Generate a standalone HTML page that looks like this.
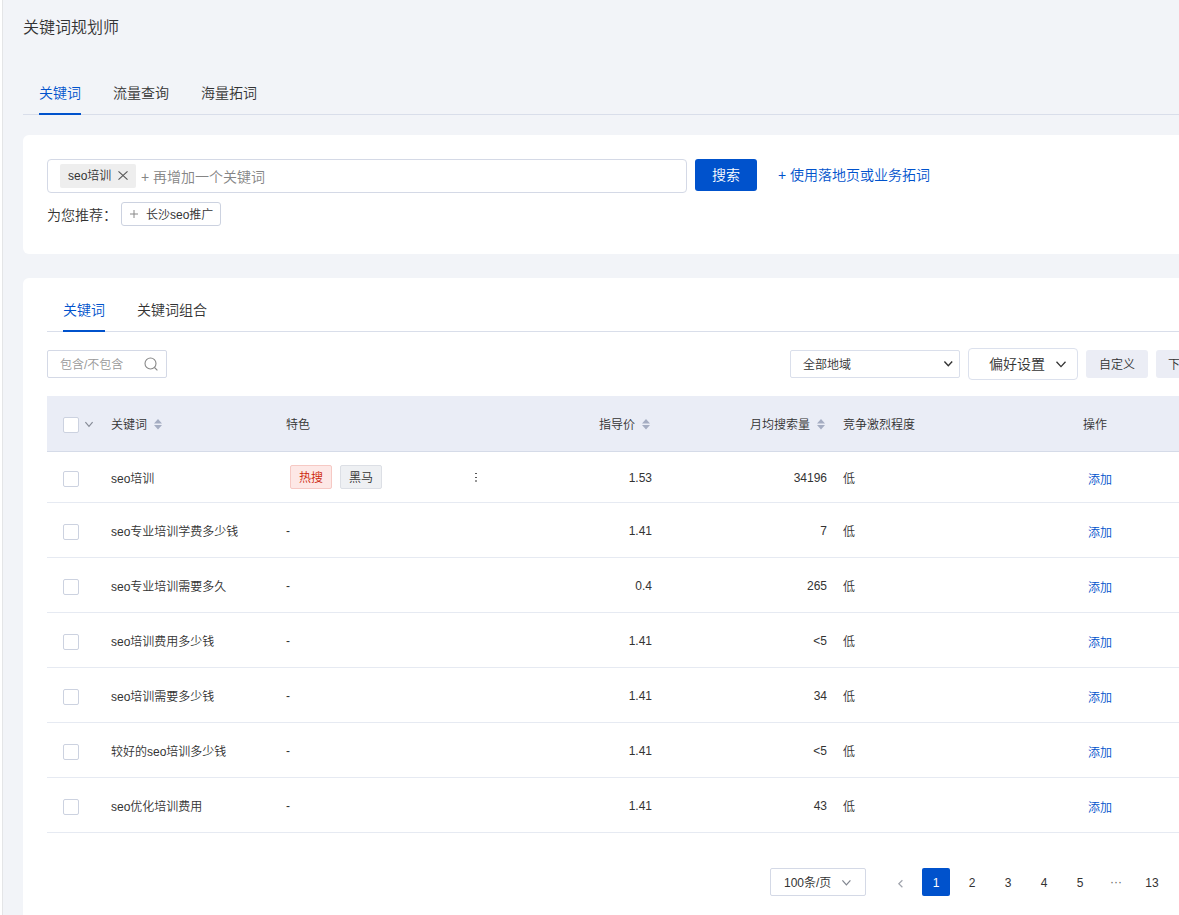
<!DOCTYPE html>
<html lang="zh-CN">
<head>
<meta charset="utf-8">
<title>关键词规划师</title>
<style>
*{box-sizing:border-box;margin:0;padding:0}
html,body{width:1179px;height:915px;overflow:hidden}
body{background:#f2f4f8;font-family:"Liberation Sans","Noto Sans CJK SC",sans-serif;color:#333;font-size:12px;position:relative;font-weight:350}
.abs{position:absolute}
.edge{left:0;top:0;width:2px;height:915px;background:#fff}
.edge2{left:2px;top:0;width:1px;height:915px;background:#e4e5e7}
.title{left:23px;top:16px;font-size:16px;line-height:24px;color:#333;white-space:nowrap}
.tabs{left:23px;top:72px;width:1156px;height:43px;border-bottom:1px solid #d9deea}
.tab{position:absolute;top:0;height:43px;line-height:42px;font-size:14px;color:#333;white-space:nowrap}
.tab.on{color:#0052cc}
.tab.on:after{content:"";position:absolute;left:0;right:0;bottom:0;height:2px;background:#0052cc}
.card{background:#fff;border-radius:6px 0 0 6px}
.c1{left:23px;top:135px;width:1156px;height:119px}
.c2{left:23px;top:278px;width:1156px;height:637px;border-radius:6px 0 0 0}
.inp{left:47px;top:159px;width:640px;height:34px;border:1px solid #d4d9e6;border-radius:4px;background:#fff}
.tag{left:60px;top:164px;width:76px;height:24px;background:#eee;border-radius:2px;font-size:12px;line-height:25px;color:#333;padding-left:8px;white-space:nowrap}
.ph{left:141px;top:167px;font-size:14px;line-height:20px;color:#858585;white-space:nowrap}
.btn{left:695px;top:159px;width:62px;height:32px;background:#0052cc;color:#fff;border-radius:3px;font-size:14px;line-height:32px;text-align:center}
.lnk{left:778px;top:165px;font-size:14px;line-height:20px;color:#0052cc;white-space:nowrap}
.rec{left:47px;top:206px;font-size:14px;line-height:18px;color:#333;white-space:nowrap}
.chip{left:121px;top:202px;width:100px;height:24px;border:1px solid #ccd2e0;border-radius:3px;font-size:12px;line-height:24px;color:#333;padding-left:24px;white-space:nowrap;background:#fff}
.tabs2{left:47px;top:289px;width:1132px;height:43px;border-bottom:1px solid #d9deea}
.flt{left:47px;top:350px;width:120px;height:28px;border:1px solid #d4d9e6;border-radius:2px;font-size:12px;line-height:28px;color:#999;padding-left:12px;white-space:nowrap;background:#fff}
.sel{left:790px;top:350px;width:170px;height:28px;border:1px solid #dadfeb;border-radius:2px;font-size:12px;line-height:29px;color:#333;padding-left:12px;background:#fff}
.pref{left:968px;top:348px;width:110px;height:32px;border:1px solid #dce1ed;border-radius:4px;font-size:14px;line-height:30px;color:#333;padding-left:20px;background:#fff}
.gbtn{top:350px;height:28px;background:#ebedf5;border-radius:3px;font-size:12px;line-height:30px;color:#333;text-align:center;white-space:nowrap}
.thead{left:47px;top:396px;width:1132px;height:56px;background:#eaedf6;border-bottom:1px solid #d5dbe8}
.th{position:absolute;top:398px;height:55px;line-height:55px;font-size:12px;color:#333;white-space:nowrap}
.row{position:absolute;left:47px;width:1132px;border-bottom:1px solid #e6eaf2}
.cell{position:absolute;font-size:12px;line-height:20px;color:#333;white-space:nowrap}
.r{text-align:right}
.cb{position:absolute;left:63px;width:16px;height:16px;border:1px solid #ccd2e0;border-radius:2px;background:#fff}
.add{color:#0052cc}
.pg{position:absolute;top:868px;height:28px;line-height:30px;font-size:12px;color:#333;text-align:center;white-space:nowrap}
svg{position:absolute;overflow:visible}
</style>
</head>
<body>
<div class="abs edge"></div><div class="abs edge2"></div>
<div class="abs title">关键词规划师</div>
<div class="abs tabs">
  <div class="tab on" style="left:16px">关键词</div>
  <div class="tab" style="left:90px">流量查询</div>
  <div class="tab" style="left:178px">海量拓词</div>
</div>

<div class="abs card c1"></div>
<div class="abs inp"></div>
<div class="abs tag">seo培训</div>
<svg style="left:118px;top:171px" width="10" height="9" viewBox="0 0 10 9"><path d="M0.5 0.3L9.5 8.7M9.5 0.3L0.5 8.7" stroke="#555" stroke-width="1.1" fill="none"/></svg>
<div class="abs ph">+ 再增加一个关键词</div>
<div class="abs btn">搜索</div>
<div class="abs lnk">+ 使用落地页或业务拓词</div>
<div class="abs rec">为您推荐：</div>
<div class="abs chip">长沙seo推广</div>
<svg style="left:130px;top:210px" width="8" height="8" viewBox="0 0 8 8"><path d="M4 0V8M0 4H8" stroke="#888" stroke-width="1" fill="none"/></svg>

<div class="abs card c2"></div>
<div class="abs tabs2">
  <div class="tab on" style="left:16px">关键词</div>
  <div class="tab" style="left:90px">关键词组合</div>
</div>
<div class="abs flt">包含/不包含</div>
<svg style="left:144px;top:357px" width="15" height="15" viewBox="0 0 15 15"><circle cx="6.5" cy="6.5" r="5.5" stroke="#888" stroke-width="1.1" fill="none"/><path d="M10.5 10.5L13.4 13.4" stroke="#888" stroke-width="1.1" fill="none"/></svg>
<div class="abs sel">全部地域</div>
<svg style="left:944px;top:361px" width="9" height="6" viewBox="0 0 9 6"><path d="M0.4 0.5L4.3 4.7L8.2 0.5" stroke="#333" stroke-width="1.4" fill="none"/></svg>
<div class="abs pref">偏好设置</div>
<svg style="left:1056px;top:361px" width="10" height="7" viewBox="0 0 10 7"><path d="M0.5 0.8L5 5.6L9.5 0.8" stroke="#333" stroke-width="1.3" fill="none"/></svg>
<div class="abs gbtn" style="left:1086px;width:62px">自定义</div>
<div class="abs gbtn" style="left:1156px;width:62px;text-align:left;padding-left:12px">下载</div>

<div class="abs thead"></div>
<div class="cb" style="top:417px"></div>
<svg style="left:85px;top:422px" width="8" height="5" viewBox="0 0 8 5"><path d="M0.4 0.2L4 4.3L7.6 0.2" stroke="#868b96" stroke-width="1.2" fill="none"/></svg>
<div class="th" style="left:111px">关键词</div>
<div class="th" style="left:286px">特色</div>
<div class="th" style="left:599px">指导价</div>
<div class="th" style="left:750px">月均搜索量</div>
<div class="th" style="left:843px">竞争激烈程度</div>
<div class="th" style="left:1083px">操作</div>
<svg class="srt" style="left:154px;top:419px" width="8" height="11" viewBox="0 0 8 11"><path d="M4 0L8 4.5H0Z M4 10.6L8 6.1H0Z" fill="#a5adc2"/></svg>
<svg class="srt" style="left:642px;top:419px" width="8" height="11" viewBox="0 0 8 11"><path d="M4 0L8 4.5H0Z M4 10.6L8 6.1H0Z" fill="#a5adc2"/></svg>
<svg class="srt" style="left:817px;top:419px" width="8" height="11" viewBox="0 0 8 11"><path d="M4 0L8 4.5H0Z M4 10.6L8 6.1H0Z" fill="#a5adc2"/></svg>

<!-- rows -->
<div class="row" style="top:452px;height:51px"></div>
<div class="row" style="top:503px;height:55px"></div>
<div class="row" style="top:558px;height:55px"></div>
<div class="row" style="top:613px;height:55px"></div>
<div class="row" style="top:668px;height:55px"></div>
<div class="row" style="top:723px;height:55px"></div>
<div class="row" style="top:778px;height:55px"></div>

<div class="cb" style="top:471px"></div>
<div class="cell" style="left:111px;top:469px">seo培训</div>
<div class="cell" style="left:290px;top:465px;width:42px;height:24px;line-height:24px;text-align:center;background:#fde8e6;border:1px solid #f6c9c4;border-radius:2px;color:#cc1f0a">热搜</div>
<div class="cell" style="left:340px;top:465px;width:42px;height:24px;line-height:24px;text-align:center;background:#eef0f3;border:1px solid #dcdfe5;border-radius:2px;color:#333">黑马</div>
<svg style="left:475px;top:473px" width="2" height="9" viewBox="0 0 2 9"><rect x="0" y="0" width="2" height="1" fill="#555"/><rect x="0" y="4" width="2" height="1" fill="#555"/><rect x="0" y="7" width="2" height="2" fill="#999"/></svg>
<div class="cell r" style="left:552px;width:100px;top:468px">1.53</div>
<div class="cell r" style="left:727px;width:100px;top:468px">34196</div>
<div class="cell" style="left:843px;top:469px">低</div>
<div class="cell add" style="left:1088px;top:470px">添加</div>

<div class="cb" style="top:524px"></div>
<div class="cell" style="left:111px;top:522px">seo专业培训学费多少钱</div>
<div class="cell" style="left:286px;top:521px">-</div>
<div class="cell r" style="left:552px;width:100px;top:521px">1.41</div>
<div class="cell r" style="left:727px;width:100px;top:521px">7</div>
<div class="cell" style="left:843px;top:522px">低</div>
<div class="cell add" style="left:1088px;top:523px">添加</div>

<div class="cb" style="top:579px"></div>
<div class="cell" style="left:111px;top:577px">seo专业培训需要多久</div>
<div class="cell" style="left:286px;top:576px">-</div>
<div class="cell r" style="left:552px;width:100px;top:576px">0.4</div>
<div class="cell r" style="left:727px;width:100px;top:576px">265</div>
<div class="cell" style="left:843px;top:577px">低</div>
<div class="cell add" style="left:1088px;top:578px">添加</div>

<div class="cb" style="top:634px"></div>
<div class="cell" style="left:111px;top:632px">seo培训费用多少钱</div>
<div class="cell" style="left:286px;top:631px">-</div>
<div class="cell r" style="left:552px;width:100px;top:631px">1.41</div>
<div class="cell r" style="left:727px;width:100px;top:631px">&lt;5</div>
<div class="cell" style="left:843px;top:632px">低</div>
<div class="cell add" style="left:1088px;top:633px">添加</div>

<div class="cb" style="top:689px"></div>
<div class="cell" style="left:111px;top:687px">seo培训需要多少钱</div>
<div class="cell" style="left:286px;top:686px">-</div>
<div class="cell r" style="left:552px;width:100px;top:686px">1.41</div>
<div class="cell r" style="left:727px;width:100px;top:686px">34</div>
<div class="cell" style="left:843px;top:687px">低</div>
<div class="cell add" style="left:1088px;top:688px">添加</div>

<div class="cb" style="top:744px"></div>
<div class="cell" style="left:111px;top:742px">较好的seo培训多少钱</div>
<div class="cell" style="left:286px;top:741px">-</div>
<div class="cell r" style="left:552px;width:100px;top:741px">1.41</div>
<div class="cell r" style="left:727px;width:100px;top:741px">&lt;5</div>
<div class="cell" style="left:843px;top:742px">低</div>
<div class="cell add" style="left:1088px;top:743px">添加</div>

<div class="cb" style="top:799px"></div>
<div class="cell" style="left:111px;top:797px">seo优化培训费用</div>
<div class="cell" style="left:286px;top:796px">-</div>
<div class="cell r" style="left:552px;width:100px;top:796px">1.41</div>
<div class="cell r" style="left:727px;width:100px;top:796px">43</div>
<div class="cell" style="left:843px;top:797px">低</div>
<div class="cell add" style="left:1088px;top:798px">添加</div>

<!-- pagination -->
<div class="pg" style="left:770px;width:96px;border:1px solid #d4d9e6;border-radius:2px;line-height:28px;text-align:left;padding-left:13px;background:#fff">100条/页</div>
<svg style="left:842px;top:880px" width="9" height="6" viewBox="0 0 9 6"><path d="M0.4 0.4L4.4 4.8L8.4 0.4" stroke="#80858f" stroke-width="1.25" fill="none"/></svg>
<svg style="left:898px;top:880px" width="5" height="8" viewBox="0 0 5 8"><path d="M4.4 0.3L0.8 3.8L4.4 7.3" stroke="#a0a4ad" stroke-width="1.2" fill="none"/></svg>
<div class="pg" style="left:922px;width:28px;background:#0052cc;color:#fff;border-radius:2px">1</div>
<div class="pg" style="left:958px;width:28px">2</div>
<div class="pg" style="left:994px;width:28px">3</div>
<div class="pg" style="left:1030px;width:28px">4</div>
<div class="pg" style="left:1066px;width:28px">5</div>
<div class="pg" style="left:1102px;width:28px;color:#666;line-height:28px">···</div>
<div class="pg" style="left:1138px;width:28px">13</div>
</body>
</html>
